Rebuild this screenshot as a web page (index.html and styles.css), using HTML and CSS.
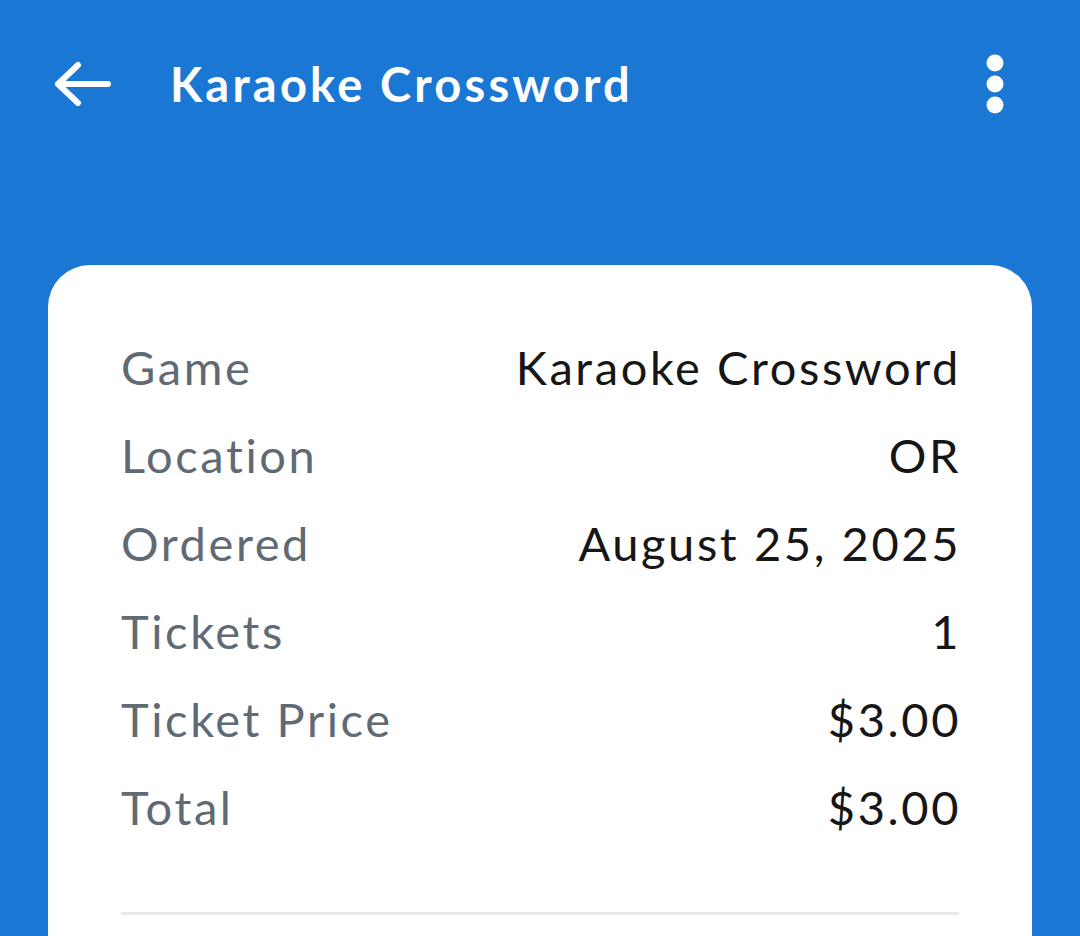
FILE: index.html
```html
<!DOCTYPE html>
<html lang="en">
<head>
    <title>Karaoke Crossword</title>
    <link rel="stylesheet" href="styles.css">
</head>
<body>
    <!-- Top bar -->
    <header class="topbar">
        <button class="icon-btn back" aria-label="Back">
            <svg width="60" height="48" viewBox="0 0 60 48">
                <path d="M4 24 H54 M24 5 L4 24 L24 43" fill="none" stroke="#fff" stroke-width="6" stroke-linecap="round" stroke-linejoin="round"/>
            </svg>
        </button>
        <h1 class="title">Karaoke Crossword</h1>
        <button class="icon-btn more" aria-label="More">
            <svg width="20" height="62" viewBox="0 0 20 62">
                <circle cx="10" cy="10" r="8.5" fill="#fff"/>
                <circle cx="10" cy="31" r="8.5" fill="#fff"/>
                <circle cx="10" cy="52" r="8.5" fill="#fff"/>
            </svg>
        </button>
    </header>

    <!-- Order details card -->
    <main class="card">
        <div class="row"><span class="label">Game</span><span class="value">Karaoke Crossword</span></div>
        <div class="row"><span class="label">Location</span><span class="value">OR</span></div>
        <div class="row"><span class="label">Ordered</span><span class="value">August 25, 2025</span></div>
        <div class="row"><span class="label">Tickets</span><span class="value">1</span></div>
        <div class="row"><span class="label">Ticket Price</span><span class="value">$3.00</span></div>
        <div class="row"><span class="label">Total</span><span class="value">$3.00</span></div>
        <hr class="divider">
    </main>
</body>
</html>
```

FILE: styles.css
```css
/* Whole screen is the blue app background */
body {
    margin: 0;
    height: 936px;
    overflow: hidden;
    background-color: #1a77d4;
    font-family: Lato, "Noto Sans", sans-serif;
}

/* Header bar */
.topbar {
    display: flex;
    align-items: center;
    height: 168px;
    padding: 0 48px 0 54px;
}

.icon-btn {
    background: none;
    border: none;
    padding: 0;
    display: flex;
}

.back {
    margin-right: 56px;
}

.title {
    flex: 1;
    margin: 0;
    color: #fff;
    font-size: 47px;
    font-weight: 700;
    letter-spacing: 3.2px;
}

.more {
    margin-right: 27px;
}

/* White card */
.card {
    margin: 97px 48px 0 48px;
    background-color: #fff;
    border-radius: 42px;
    padding: 58px 73px 60px 73px;
    height: 800px;
}

.row {
    display: flex;
    justify-content: space-between;
    align-items: center;
    height: 88px;
    font-size: 47px;
    letter-spacing: 2.6px;
}

.label {
    color: #5f6a74;
}

.value {
    color: #161616;
    margin-right: -2px;
}

.divider {
    border: none;
    height: 3px;
    background-color: #e8eaec;
    margin: 61px 0 0 0;
}
```
